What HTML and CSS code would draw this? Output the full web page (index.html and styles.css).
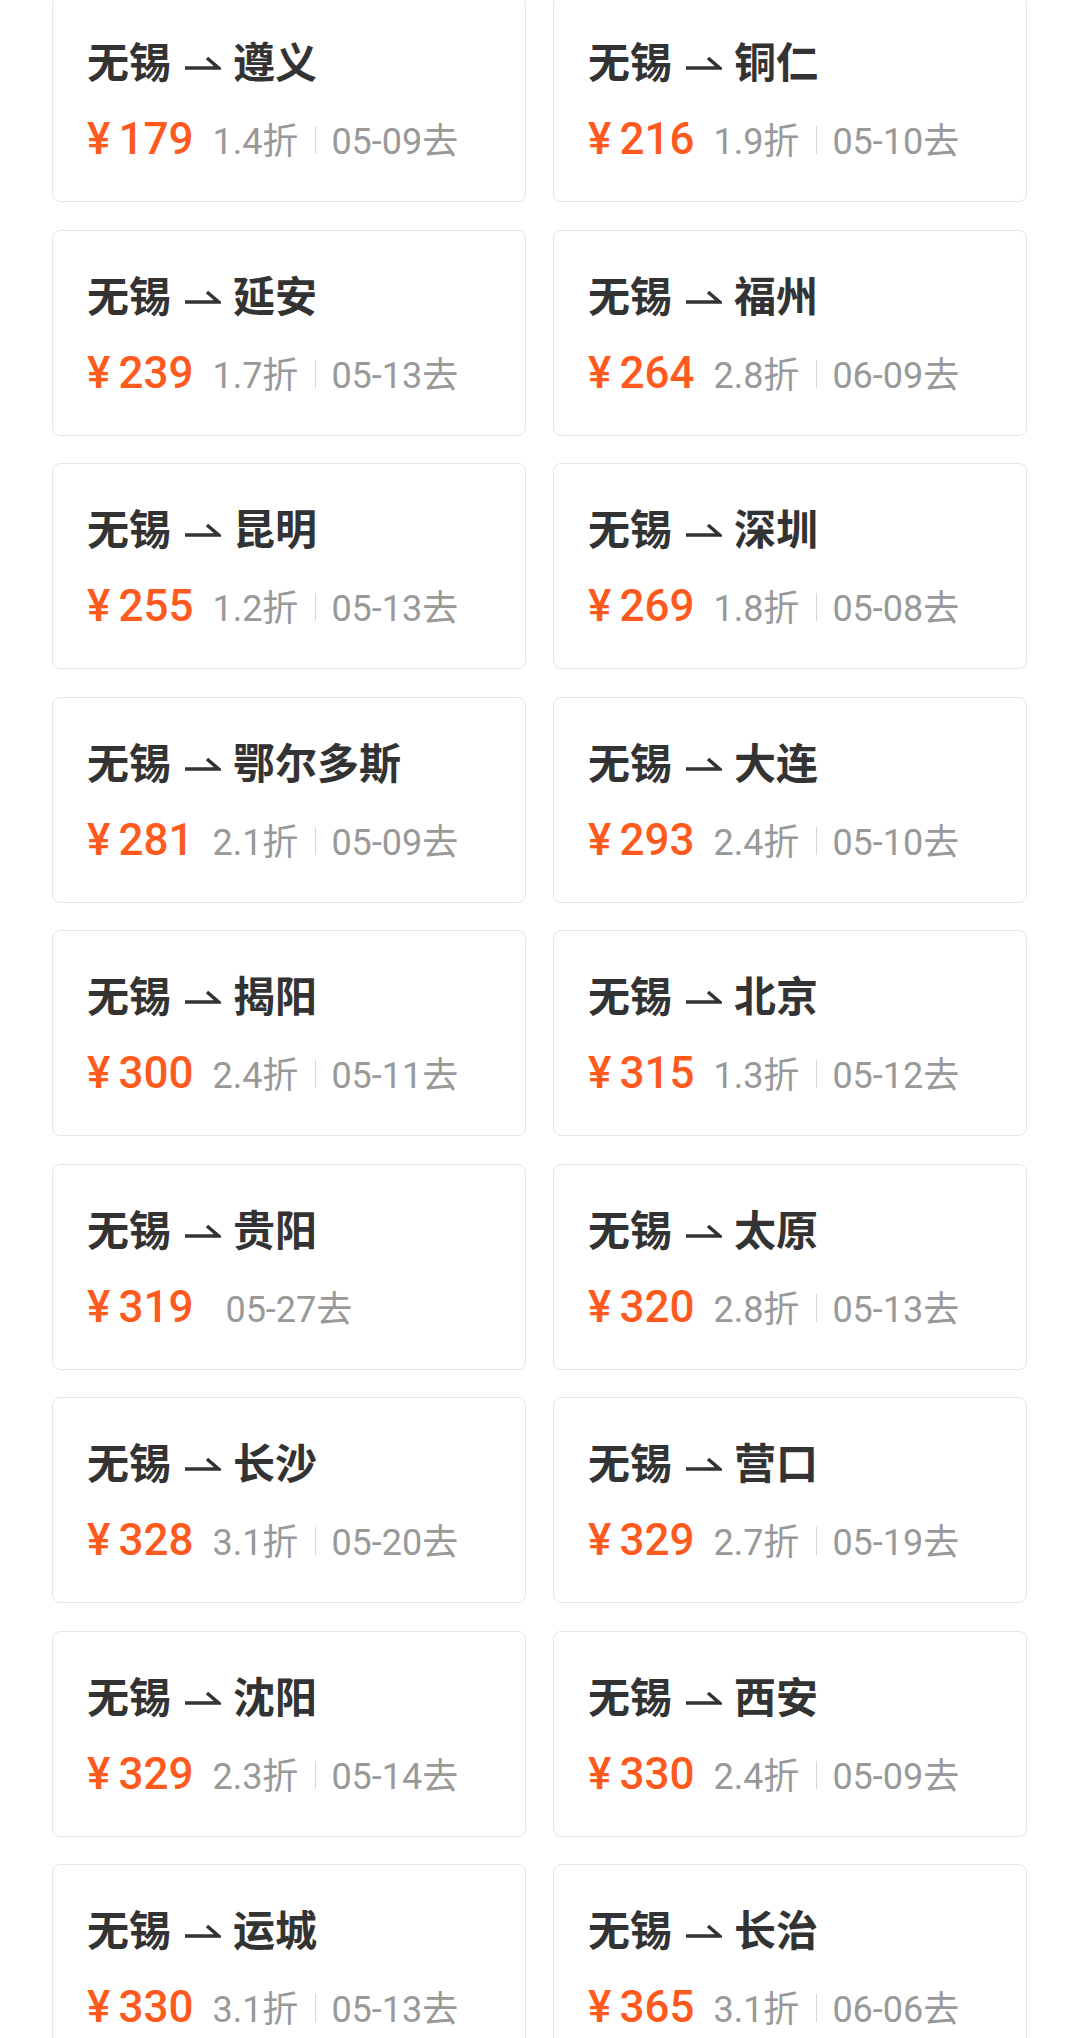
FILE: index.html
```html
<!DOCTYPE html>
<html lang="zh-CN">
<head>
  <meta charset="UTF-8" />
  <meta name="viewport" content="width=device-width, initial-scale=1.0"/>
  <title>特价机票</title>
  <link rel="stylesheet" href="styles.css">
</head>
<body>

  <div class="list" id="list"></div>

  <script>
    // low fare routes from Wuxi
    const routes = [
      ['遵义', 179, '1.4', '05-09'], ['铜仁', 216, '1.9', '05-10'],
      ['延安', 239, '1.7', '05-13'], ['福州', 264, '2.8', '06-09'],
      ['昆明', 255, '1.2', '05-13'], ['深圳', 269, '1.8', '05-08'],
      ['鄂尔多斯', 281, '2.1', '05-09'], ['大连', 293, '2.4', '05-10'],
      ['揭阳', 300, '2.4', '05-11'], ['北京', 315, '1.3', '05-12'],
      ['贵阳', 319, '', '05-27'], ['太原', 320, '2.8', '05-13'],
      ['长沙', 328, '3.1', '05-20'], ['营口', 329, '2.7', '05-19'],
      ['沈阳', 329, '2.3', '05-14'], ['西安', 330, '2.4', '05-09'],
      ['运城', 330, '3.1', '05-13'], ['长治', 365, '3.1', '06-06']
    ];

    const arrow = '<svg class="arrow" width="36" height="14" viewBox="0 0 36 14">' +
      '<path d="M0 12H33.5L22 2" fill="none" stroke="#333" stroke-width="3.5"/></svg>';

    const list = document.getElementById('list');
    list.innerHTML = routes.map(([city, price, discount, date]) => `
      <div class="card">
        <div class="title">无锡${arrow}${city}</div>
        <div class="info">
          <span class="yen">¥</span><span class="price">${price}</span>
          ${discount ? `<span class="discount">${discount}折</span>` : ''}
          <span class="date">${date}去</span>
        </div>
      </div>`).join('');
  </script>

</body>
</html>
```

FILE: styles.css
```css
body {
  margin: 0;
  background: #fff;
  font-family: Roboto, "Noto Sans CJK SC", sans-serif;
}

.list {
  display: grid;
  grid-template-columns: 1fr 1fr;
  column-gap: 27px;
  row-gap: 27.5px;
  padding: 0 53px 0 52px;
  margin-top: -4px;
}

.card {
  height: 206px;
  box-sizing: border-box;
  border: 1px solid #e6e6e6;
  border-radius: 8px;
  padding: 35px 0 0 34px;
}

.title {
  font-family: "Noto Sans CJK SC", sans-serif;
  font-size: 42px;
  font-weight: 600;
  line-height: 56px;
  color: #333;
  white-space: nowrap;
}

.arrow {
  margin: 0 12px 0 14px;
  vertical-align: 8px;
}

.info {
  display: flex;
  align-items: baseline;
  margin-top: 25px;
  white-space: nowrap;
}

.yen, .price {
  font-size: 44px;
  font-weight: 500;
  line-height: 52px;
  color: #ff5a1e;
}

.yen {
  margin-right: 8px;
}

.discount, .date {
  font-size: 36px;
  line-height: 52px;
  color: #999;
}

.discount {
  margin-left: 19px;
}

.discount + .date::before {
  content: "";
  display: inline-block;
  width: 1px;
  height: 28px;
  background: #d6d6d6;
  margin: 0 15px 0 17px;
}

.price + .date {
  margin-left: 32px;
}
```
